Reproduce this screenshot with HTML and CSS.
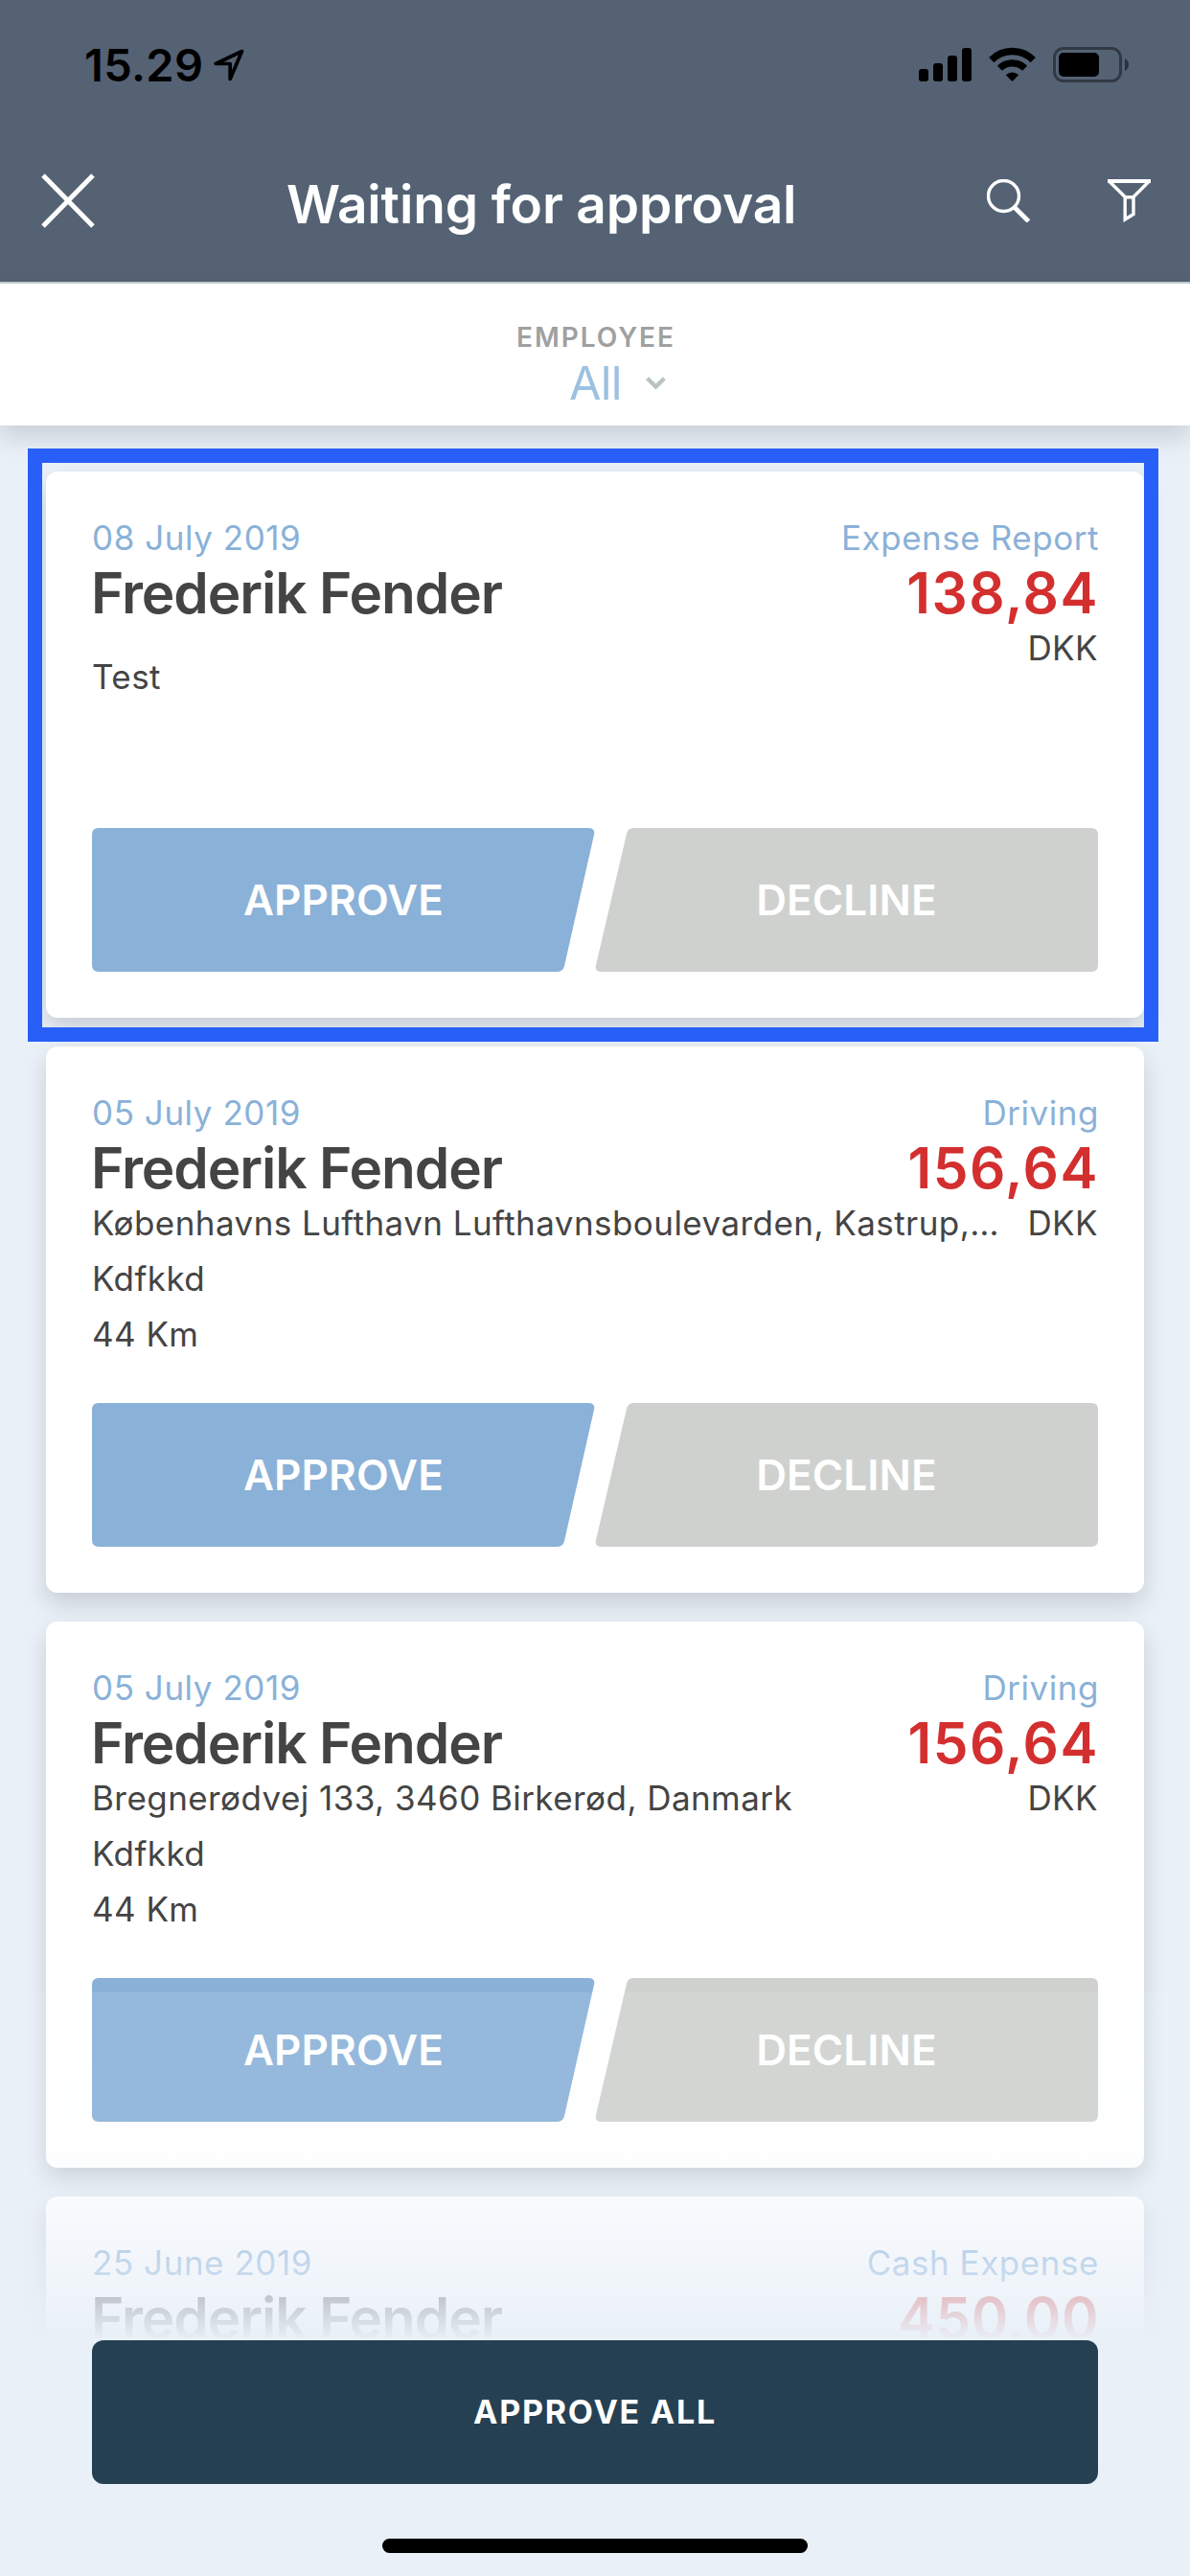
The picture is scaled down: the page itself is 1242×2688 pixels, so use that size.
FILE: index.html
```html
<!DOCTYPE html>
<html lang="en">
<head>
  <meta charset="UTF-8" />
  <meta name="viewport" content="width=device-width, initial-scale=1.0" />
  <title>Waiting for approval</title>
  <link rel="stylesheet" href="styles.css">
</head>
<body>
  <!-- HEADER -->
  <header class="header">
    <div class="status">
      <span class="time">15.29</span>
      <svg class="location" width="32" height="34" viewBox="0 0 32 34">
        <path d="M29.500 2.500 L2.200 15.500 H17.200 V31.500 Z" fill="none" stroke="#000" stroke-width="3.700" stroke-linejoin="round" />
      </svg>
      <div class="indicators">
        <svg width="55" height="37" viewBox="0 0 55 37">
          <rect x="0" y="23" width="10" height="13" rx="3" />
          <rect x="15" y="17" width="10" height="19" rx="3" />
          <rect x="30" y="9" width="10" height="27" rx="3" />
          <rect x="45" y="1" width="10" height="35" rx="3" />
        </svg>
        <svg class="wifi" width="49" height="37" viewBox="0 0 49 37">
          <path d="M2.8 13.6 A30.5 30.5 0 0 1 46.2 13.6" fill="none" stroke="#000" stroke-width="7.6" />
          <path d="M11.4 22.2 A18.6 18.6 0 0 1 37.6 22.2" fill="none" stroke="#000" stroke-width="7.2" />
          <path d="M17.8 29.3 A9.6 9.6 0 0 1 31.2 29.3 L24.5 36 Z" />
        </svg>
        <svg width="80" height="37" viewBox="0 0 80 37">
          <rect x="1.5" y="1.5" width="69" height="34" rx="9.5" fill="none" stroke="#000" stroke-opacity=".42" stroke-width="3" />
          <rect x="6" y="6" width="42" height="25" rx="5" />
          <path d="M75 12 Q79 14.500 79 18.500 Q79 22.500 75 25 Z" fill-opacity=".5" />
        </svg>
      </div>
    </div>
    <div class="nav">
      <svg class="close" width="56" height="57" viewBox="0 0 56 57">
        <path d="M2 2 L54 55 M54 2 L2 55" stroke="#fff" stroke-width="5" />
      </svg>
      <h1>Waiting for approval</h1>
      <div class="actions">
        <svg width="45" height="45" viewBox="0 0 45 45" fill="none" stroke="#fff">
          <circle cx="17.500" cy="17.500" r="16" stroke-width="3.400" />
          <path d="M28.500 29 L43.500 44" stroke-width="4.800" />
        </svg>
        <svg width="45" height="45" viewBox="0 0 45 45" fill="none" stroke="#fff" stroke-width="3.400">
          <path d="M0 2 H45" stroke-width="4" />
          <path d="M2.500 3 L18.200 18.500 V42 L27 36.500 V18.500 L42.500 3 M18.500 18.800 H27" />
        </svg>
      </div>
    </div>
  </header>

  <!-- EMPLOYEE FILTER -->
  <div class="filter">
    <div class="filter-label">EMPLOYEE</div>
    <div class="filter-value">
      <span>All</span>
      <svg width="21" height="14" viewBox="0 0 21 14">
        <path d="M1.600 1.800 L10.500 10.500 L19.400 1.800" fill="none" stroke="#b7c4c2" stroke-width="4.400" />
      </svg>
    </div>
  </div>

  <!-- CARDS -->
  <main class="list">
    <article class="card selected">
      <div class="row date"><span>08 July 2019</span><span>Expense Report</span></div>
      <div class="row name"><h2>Frederik Fender</h2><span class="amount">138,84</span></div>
      <div class="row line"><span class="text low">Test</span><span>DKK</span></div>
      <div class="buttons">
        <button class="approve">APPROVE</button><button class="decline">DECLINE</button>
      </div>
    </article>

    <article class="card">
      <div class="row date"><span>05 July 2019</span><span>Driving</span></div>
      <div class="row name"><h2>Frederik Fender</h2><span class="amount">156,64</span></div>
      <div class="row line"><span class="text">Københavns Lufthavn Lufthavnsboulevarden, Kastrup,…</span><span>DKK</span></div>
      <div class="row line">Kdfkkd</div>
      <div class="row line">44 Km</div>
      <div class="buttons">
        <button class="approve">APPROVE</button><button class="decline">DECLINE</button>
      </div>
    </article>

    <article class="card">
      <div class="row date"><span>05 July 2019</span><span>Driving</span></div>
      <div class="row name"><h2>Frederik Fender</h2><span class="amount">156,64</span></div>
      <div class="row line"><span class="text">Bregnerødvej 133, 3460 Birkerød, Danmark</span><span>DKK</span></div>
      <div class="row line">Kdfkkd</div>
      <div class="row line">44 Km</div>
      <div class="buttons">
        <button class="approve">APPROVE</button><button class="decline">DECLINE</button>
      </div>
    </article>

    <article class="card">
      <div class="row date"><span>25 June 2019</span><span>Cash Expense</span></div>
      <div class="row name"><h2>Frederik Fender</h2><span class="amount round">450,00</span></div>
    </article>
  </main>

  <!-- FOOTER over the list -->
  <footer class="footer">
    <button class="approve-all">APPROVE ALL</button>
    <div class="home"></div>
  </footer>
</body>
</html>
```
FILE: styles.css
```css
:root {
  --bg: #e9f0f8;
  --header: #546274;
  --blue: #8ab1d8;
  --grey: #cfd1ce;
  --text: #444;
  --red: #d32f2f;
  --navy: #254052;
  --frame: #285ff8;
}

/* RESET & BASE */
*, *::after { margin:0; padding:0; box-sizing:border-box; }
body {
  position:relative; width:1242px; height:2688px; overflow:hidden;
  background:var(--bg); color:var(--text);
  font-family:Inter, "Liberation Sans", sans-serif;
}
svg { display:block; flex:none; }
button { border:0; color:#fff; font-family:inherit; }

/* HEADER */
.header { height:296px; background:var(--header); border-bottom:2px solid #c6d0d2; }
.status { display:flex; height:130px; padding:38px 63px 0 88px; }
.time { width:135px; font-size:47px; font-weight:600; line-height:60px; letter-spacing:.36px; color:#000; }
.location { margin-top:13px; }
.indicators { display:flex; margin:11px 0 0 auto; }
.wifi { margin:0 18px; }
.nav { display:flex; height:164px; padding:51px 41px 0 43px; }
.nav h1 {
  margin:2px 0 0 200px; color:#fff; white-space:nowrap;
  font-size:55px; font-weight:600; line-height:60px; letter-spacing:-.14px;
}
.actions { display:flex; gap:81px; margin:6px 0 0 auto; }

/* EMPLOYEE FILTER */
.filter {
  position:relative; height:148px; padding-top:39px; background:#fff;
  text-align:center; box-shadow:0 12px 24px rgba(0,0,0,.14);
}
.filter-label { padding-left:2px; font-size:28px; font-weight:600; line-height:34px; letter-spacing:1.97px; color:#a0a0a0; }
.filter-value {
  display:flex; justify-content:center; gap:25px; padding-left:47px; margin-top:1px;
  font-size:48.5px; font-weight:400; line-height:60px; letter-spacing:-.7px; color:#9cc1e1;
}
.filter-value svg { margin-top:23px; }

/* CARDS */
.list { display:flex; flex-direction:column; gap:30px; height:2244px; padding:48px 48px 0; overflow:hidden; }
.card {
  display:flex; flex-direction:column; flex:none; height:570px; padding:42px 48px 48px;
  background:#fff; border-radius:12px; box-shadow:0 12px 24px rgba(0,0,0,.14);
}
.selected { position:relative; }
.selected::after {
  content:''; position:absolute; top:-24px; left:-19px; width:1180px; height:619px;
  border:15.500px solid var(--frame);
}
.row { display:flex; justify-content:space-between; white-space:nowrap; }
.date { margin-right:-1px; font-size:35px; line-height:54px; letter-spacing:.55px; color:var(--blue); }
.name { margin-top:1px; font-size:58.5px; font-weight:600; line-height:60px; }
.name h2 { margin-left:-1px; font-size:inherit; font-weight:inherit; letter-spacing:-1.08px; }
.amount { letter-spacing:1.5px; color:var(--red); margin-right:-1px; }
.round { letter-spacing:.5px; }
.line { height:58px; font-size:35px; line-height:58px; letter-spacing:.44px; }
.name + .line { margin-top:-2px; }
.low { padding-top:30px; }
.buttons { display:flex; height:150px; margin-top:auto; }
.buttons button { width:525px; font-size:44px; font-weight:600; line-height:150px; letter-spacing:.1px; }
.approve {
  background:var(--blue);
  clip-path:path("M7 0 H518 Q525.500 0 524 7 L493 144 Q491.500 150 485 150 H7 Q0 150 0 143 V7 Q0 0 7 0 Z");
}
.decline {
  background:var(--grey);
  clip-path:path("M40 0 H518 Q525 0 525 7 V143 Q525 150 518 150 H7 Q-.5 150 1 143 L33 6 Q34.500 0 40 0 Z");
}

/* FOOTER */
.footer {
  position:absolute; left:0; bottom:0; width:100%; height:609px; padding:363px 96px 0;
  background:linear-gradient(rgba(244,250,252,.1) 0, rgba(240,246,250,.11) 170px, rgba(233,240,248,.3) 222px, rgba(233,240,248,.55) 272px, rgba(233,240,248,.74) 315px, var(--bg) 363px);
}
.approve-all {
  display:block; width:100%; height:150px; border-radius:12px; background:var(--navy);
  font-size:34px; font-weight:700; line-height:150px; letter-spacing:1.77px;
}
.home { width:444px; height:15px; margin:57px auto 0; border-radius:8px; background:#000; }
```
